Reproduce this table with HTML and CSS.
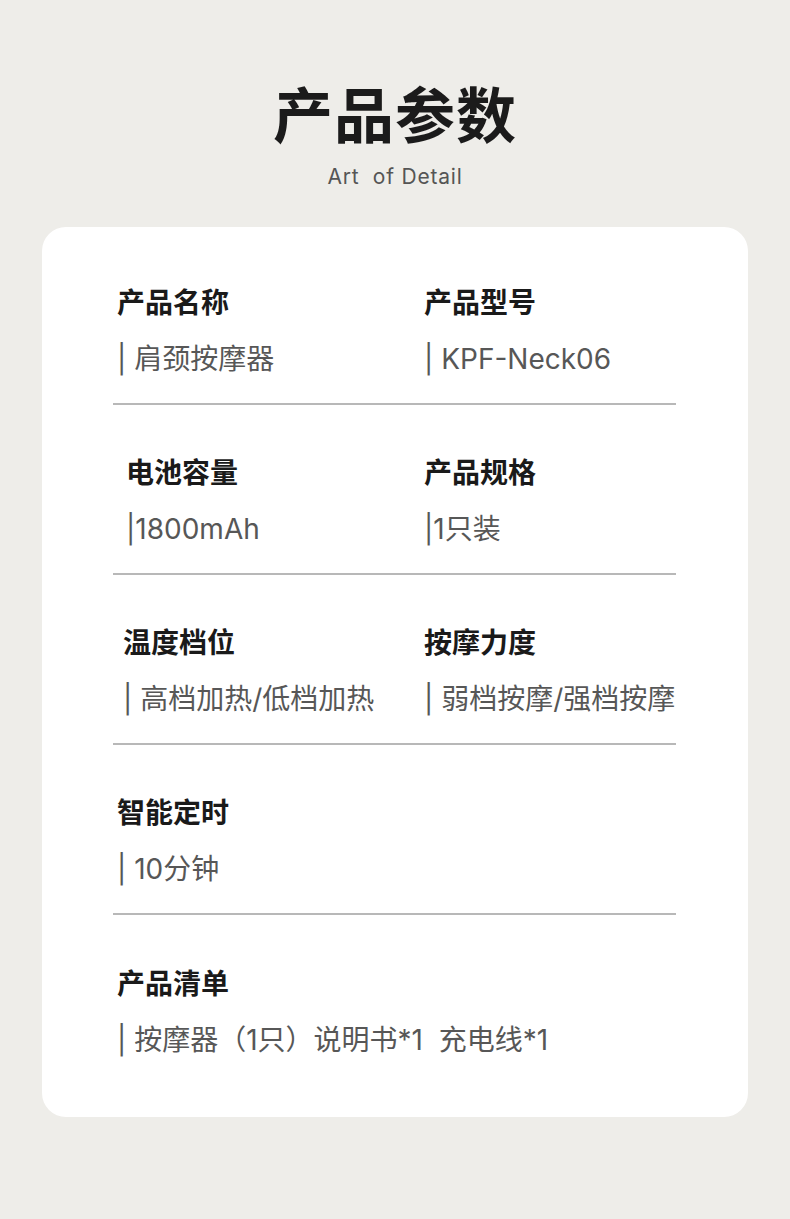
FILE: index.html
```html
<!DOCTYPE html>
<html lang="zh-CN">
<head>
<meta charset="utf-8">
<title>产品参数</title>
<link rel="stylesheet" href="styles.css">
</head>
<body>
<header class="head">
  <h1 class="title">产品参数</h1>
  <p class="subtitle">Art&nbsp;&nbsp;of Detail</p>
</header>
<section class="card">
  <div class="row">
    <div class="cell">
      <div class="label">产品名称</div>
      <div class="value">| 肩颈按摩器</div>
    </div>
    <div class="cell">
      <div class="label">产品型号</div>
      <div class="value">| KPF-Neck06</div>
    </div>
  </div>
  <div class="row">
    <div class="cell shift-lg">
      <div class="label">电池容量</div>
      <div class="value">|1800mAh</div>
    </div>
    <div class="cell">
      <div class="label">产品规格</div>
      <div class="value">|1只装</div>
    </div>
  </div>
  <div class="row">
    <div class="cell shift-md">
      <div class="label">温度档位</div>
      <div class="value">| 高档加热/低档加热</div>
    </div>
    <div class="cell">
      <div class="label">按摩力度</div>
      <div class="value">| 弱档按摩/强档按摩</div>
    </div>
  </div>
  <div class="row">
    <div class="cell">
      <div class="label">智能定时</div>
      <div class="value">| 10分钟</div>
    </div>
  </div>
  <div class="row last">
    <div class="cell wide">
      <div class="label">产品清单</div>
      <div class="value">| 按摩器（1只）说明书*1&nbsp;&nbsp;充电线*1</div>
    </div>
  </div>
</section>
</body>
</html>
```

FILE: styles.css
```css
html, body {
  margin: 0;
  padding: 0;
}
body {
  background: #eeede9;
  width: 790px;
  height: 1219px;
  font-family: Inter, "Noto Sans CJK SC", "Noto Sans", sans-serif;
  overflow: hidden;
}
.head {
  padding-top: 77px;
  text-align: center;
}
.title {
  margin: 0;
  font-family: "Noto Sans CJK SC", sans-serif;
  font-size: 60px;
  line-height: 70px;
  font-weight: 700;
  color: #1b1b1b;
  letter-spacing: 1px;
}
.subtitle {
  margin: 16px 0 0;
  font-family: Inter, "Noto Sans", sans-serif;
  font-size: 21px;
  line-height: 28px;
  letter-spacing: 0.8px;
  color: #555;
}
.card {
  margin: 36px 0 0 42px;
  width: 706px;
  box-sizing: border-box;
  background: #fff;
  border-radius: 24px;
  padding: 8px 72px 57px 71px;
}
.row {
  display: grid;
  grid-template-columns: 307px 1fr;
  padding: 48px 0 24px;
  border-bottom: 2px solid #b8b8b8;
}
.row.last {
  border-bottom: none;
  padding-bottom: 0;
  padding-top: 49px;
}
.cell {
  padding-left: 4px;
  display: flex;
  flex-direction: column;
  gap: 20px;
}
.cell.shift-lg { padding-left: 13px; }
.cell.shift-md { padding-left: 10px; }
.cell.wide { grid-column: 1 / -1; }
.label {
  font-family: "Noto Sans CJK SC", sans-serif;
  font-size: 28px;
  line-height: 36px;
  font-weight: 700;
  color: #1a1a1a;
}
.value {
  font-size: 28px;
  line-height: 40px;
  color: #575757;
  white-space: nowrap;
}
```
